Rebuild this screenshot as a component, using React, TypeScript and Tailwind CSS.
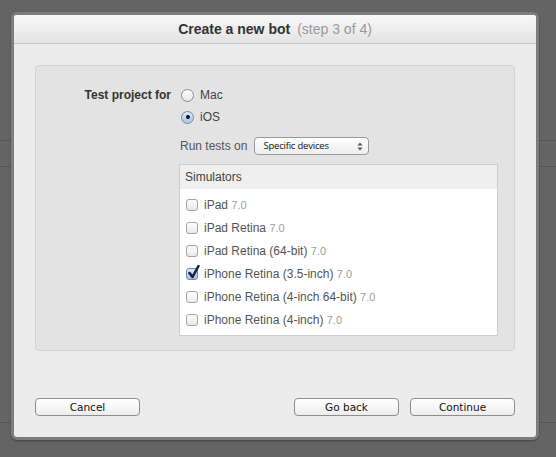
import React from 'react';

const sans = { fontFamily: '"Liberation Sans", Arial, sans-serif' };
const ui = { fontFamily: '"DejaVu Sans", "Open Sans", sans-serif' };

const simulators = [
  { name: 'iPad', checked: false },
  { name: 'iPad Retina', checked: false },
  { name: 'iPad Retina (64-bit)', checked: false },
  { name: 'iPhone Retina (3.5-inch)', checked: true },
  { name: 'iPhone Retina (4-inch 64-bit)', checked: false },
  { name: 'iPhone Retina (4-inch)', checked: false },
];

function Radio({ checked }: { checked?: boolean }) {
  return (
    <span
      className={`relative flex h-[13px] w-[13px] shrink-0 items-center justify-center rounded-full border ${
        checked
          ? 'border-[#6f87ad] bg-gradient-to-b from-[#dfe9f8] to-[#a9c3ea]'
          : 'border-[#8c8c8c] bg-gradient-to-b from-white to-[#e6e6e6]'
      }`}
    >
      {checked && <span className="h-[4px] w-[4px] rounded-full bg-[#111]" />}
    </span>
  );
}

function Checkbox({ checked }: { checked?: boolean }) {
  return (
    <span
      className={`relative h-[12px] w-[12px] shrink-0 rounded-[3px] border ${
        checked
          ? 'border-[#6f87ad] bg-gradient-to-b from-[#dfe9f8] to-[#a9c3ea]'
          : 'border-[#a3a3a3] bg-gradient-to-b from-white to-[#e9e9e9]'
      }`}
    >
      {checked && (
        <svg className="absolute left-[1px] top-[-4px] h-[14px] w-[12px]" viewBox="0 0 12 14">
          <path d="M1.5 8 L4.5 12 L10.5 1" fill="none" stroke="#15213f" strokeWidth="2.6" strokeLinecap="round" strokeLinejoin="round" />
        </svg>
      )}
    </span>
  );
}

function Button({ children }: { children: React.ReactNode }) {
  return (
    <button
      style={ui}
      className="h-[18px] w-[105px] rounded-[4px] border border-[#8e8e8e] bg-gradient-to-b from-white via-[#f7f7f7] to-[#ececec] pt-[1px] text-[10.5px] leading-none text-[#111]"
    >
      {children}
    </button>
  );
}

export default function App() {
  return (
    <div className="relative h-[457px] w-[556px] overflow-hidden bg-[#646464]">
      {/* page behind the sheet */}
      <div className="h-[140px]" />
      <div className="h-[26px] border-t border-[#545454]" />
      <div className="h-[256px] border-t border-[#545454]" />
      <div className="h-[35px] border-t border-[#545454]" />

      {/* sheet */}
      <div className="absolute left-[11px] top-[12px] flex h-[428px] w-[528px] flex-col overflow-hidden rounded-[6px] border-[3px] border-[#7c7c7c] bg-[#ececec] shadow-[0_1px_2px_rgba(0,0,0,0.35)]">
        <div
          style={sans}
          className="flex h-[29px] shrink-0 items-center justify-center gap-[7px] border-b border-[#c6c6c6] bg-gradient-to-b from-[#f8f8f8] to-[#e3e3e3] text-[14px]"
        >
          <span className="font-bold text-[#333]">Create a new bot</span>
          <span className="text-[#9a9a9a]">(step 3 of 4)</span>
        </div>

        <div className="flex flex-1 flex-col px-[21px] pb-[21px] pt-[21px]">
          <div
            style={sans}
            className="h-[286px] rounded-[4px] border border-[#d4d4d4] bg-[#e3e3e3] pb-[14px] pt-[18px] text-[12px]"
          >
            <div className="grid grid-cols-[135px_1fr] gap-x-[8px]">
              <div className="flex h-[22px] items-center justify-end font-bold text-[#333]">Test project for</div>
              <div className="flex flex-col">
                <label className="ml-[2px] flex h-[22px] items-center gap-[6px] text-[#444]">
                  <Radio />
                  Mac
                </label>
                <label className="ml-[2px] flex h-[22px] items-center gap-[6px] text-[#444]">
                  <Radio checked />
                  iOS
                </label>

                <div className="mt-[9px] flex h-[18px] items-center gap-[7px]">
                  <span className="ml-[1px] text-[#555]">Run tests on</span>
                  <div
                    style={{ fontFamily: '"Open Sans", sans-serif' }}
                    className="flex h-[18px] w-[115px] items-center justify-between rounded-[4px] border border-[#999] bg-gradient-to-b from-white to-[#ededed] pl-[8px] pr-[5px] text-[9.5px] tracking-[-0.2px] text-[#111]"
                  >
                    <span>Specific devices</span>
                    <svg className="h-[9px] w-[6px]" viewBox="0 0 6 9">
                      <path d="M3 0.5 L5.5 3.5 L0.5 3.5 Z" fill="#555" />
                      <path d="M3 8.5 L5.5 5.5 L0.5 5.5 Z" fill="#555" />
                    </svg>
                  </div>
                </div>

                <div className="mt-[9px] mr-[16px] flex h-[172px] flex-col border border-[#cdcdcd] bg-white">
                  <div className="flex h-[24px] items-center bg-[#efefef] pl-[5px] text-[#444]">Simulators</div>
                  <div className="flex flex-col pt-[4px]">
                    {simulators.map((s) => (
                      <label key={s.name} className="flex h-[23px] items-center gap-[6px] pl-[6px] text-[#555]">
                        <Checkbox checked={s.checked} />
                        <span>
                          {s.name} <span className="text-[11px] text-[#a0a0a0]">7.0</span>
                        </span>
                      </label>
                    ))}
                  </div>
                </div>
              </div>
            </div>
          </div>

          <div className="mt-auto flex items-center">
            <Button>Cancel</Button>
            <div className="flex-1" />
            <div className="flex gap-[11px]">
              <Button>Go back</Button>
              <Button>Continue</Button>
            </div>
          </div>
        </div>
      </div>
    </div>
  );
}
